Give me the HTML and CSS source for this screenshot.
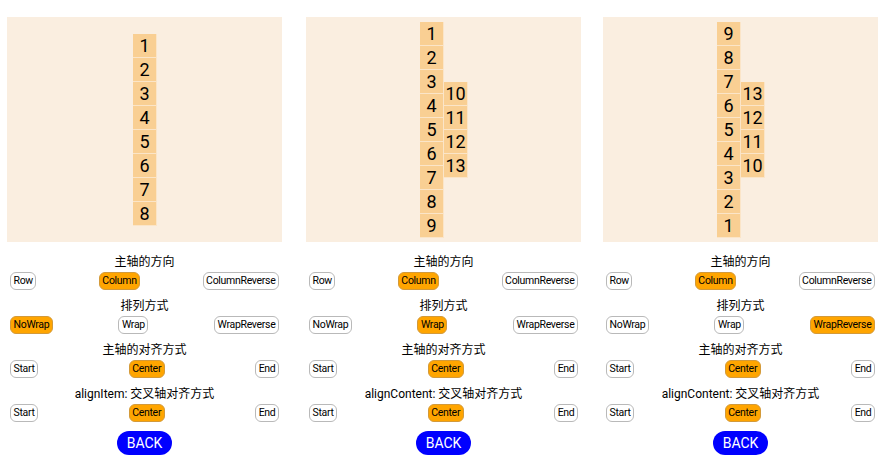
FILE: index.html
```html
<!DOCTYPE html>
<html>
<head>
<meta charset="utf-8">
<link rel="stylesheet" href="styles.css">
</head>
<body>
<div class="page">
  <div class="panel">
    <div class="canvas">
      <div class="item">1</div><div class="item">2</div><div class="item">3</div><div class="item">4</div>
      <div class="item">5</div><div class="item">6</div><div class="item">7</div><div class="item">8</div>
    </div>
    <div class="sec first">
      <div class="title">主轴的方向</div>
      <div class="btns"><span class="btn">Row</span><span class="btn on">Column</span><span class="btn">ColumnReverse</span></div>
    </div>
    <div class="sec">
      <div class="title">排列方式</div>
      <div class="btns"><span class="btn on">NoWrap</span><span class="btn">Wrap</span><span class="btn">WrapReverse</span></div>
    </div>
    <div class="sec">
      <div class="title">主轴的对齐方式</div>
      <div class="btns"><span class="btn">Start</span><span class="btn on">Center</span><span class="btn">End</span></div>
    </div>
    <div class="sec">
      <div class="title">alignItem: 交叉轴对齐方式</div>
      <div class="btns"><span class="btn">Start</span><span class="btn on">Center</span><span class="btn">End</span></div>
    </div>
    <div class="back">BACK</div>
  </div>

  <div class="panel">
    <div class="canvas wrap">
      <div class="item">1</div><div class="item">2</div><div class="item">3</div><div class="item">4</div>
      <div class="item">5</div><div class="item">6</div><div class="item">7</div><div class="item">8</div>
      <div class="item">9</div><div class="item">10</div><div class="item">11</div><div class="item">12</div>
      <div class="item">13</div>
    </div>
    <div class="sec first">
      <div class="title">主轴的方向</div>
      <div class="btns"><span class="btn">Row</span><span class="btn on">Column</span><span class="btn">ColumnReverse</span></div>
    </div>
    <div class="sec">
      <div class="title">排列方式</div>
      <div class="btns"><span class="btn">NoWrap</span><span class="btn on">Wrap</span><span class="btn">WrapReverse</span></div>
    </div>
    <div class="sec">
      <div class="title">主轴的对齐方式</div>
      <div class="btns"><span class="btn">Start</span><span class="btn on">Center</span><span class="btn">End</span></div>
    </div>
    <div class="sec">
      <div class="title">alignContent: 交叉轴对齐方式</div>
      <div class="btns"><span class="btn">Start</span><span class="btn on">Center</span><span class="btn">End</span></div>
    </div>
    <div class="back">BACK</div>
  </div>

  <div class="panel">
    <div class="canvas wrap rev">
      <div class="item">1</div><div class="item">2</div><div class="item">3</div><div class="item">4</div>
      <div class="item">5</div><div class="item">6</div><div class="item">7</div><div class="item">8</div>
      <div class="item">9</div><div class="item">10</div><div class="item">11</div><div class="item">12</div>
      <div class="item">13</div>
    </div>
    <div class="sec first">
      <div class="title">主轴的方向</div>
      <div class="btns"><span class="btn">Row</span><span class="btn on">Column</span><span class="btn">ColumnReverse</span></div>
    </div>
    <div class="sec">
      <div class="title">排列方式</div>
      <div class="btns"><span class="btn">NoWrap</span><span class="btn">Wrap</span><span class="btn on">WrapReverse</span></div>
    </div>
    <div class="sec">
      <div class="title">主轴的对齐方式</div>
      <div class="btns"><span class="btn">Start</span><span class="btn on">Center</span><span class="btn">End</span></div>
    </div>
    <div class="sec">
      <div class="title">alignContent: 交叉轴对齐方式</div>
      <div class="btns"><span class="btn">Start</span><span class="btn on">Center</span><span class="btn">End</span></div>
    </div>
    <div class="back">BACK</div>
  </div>
</div>
</body>
</html>
```

FILE: styles.css
```css
html, body {
  margin: 0;
  padding: 0;
  background: #ffffff;
}
body {
  font-family: Roboto, "Noto Sans CJK SC", sans-serif;
  color: #000;
}
.page {
  display: flex;
  padding: 17px 0 0 7px;
}
.panel {
  width: 275px;
  display: flex;
  flex-direction: column;
}
.panel + .panel {
  margin-left: 24px;
}
.panel + .panel + .panel {
  margin-left: 22px;
}
.canvas {
  height: 225px;
  background: #faeee0;
  display: flex;
  flex-direction: column;
  flex-wrap: nowrap;
  justify-content: center;
  align-items: center;
  align-content: center;
}
.canvas.wrap {
  flex-wrap: wrap;
}
.canvas.rev {
  flex-direction: column-reverse;
}
.item {
  width: 24px;
  height: 24px;
  flex: none;
  background: #f9cf93;
  box-shadow: inset -1px -1px 0 #fbe5c8;
  font-size: 18px;
  line-height: 24px;
  text-align: center;
}
.sec {
  display: flex;
  flex-direction: column;
  margin-top: 6px;
}
.sec.first {
  margin-top: 10px;
}
.title {
  font-size: 12px;
  line-height: 20px;
  height: 20px;
  text-align: center;
}
.btns {
  display: flex;
  justify-content: space-between;
  padding: 0 3px;
}
.btn {
  box-sizing: border-box;
  height: 18px;
  border: 1px solid #b9b9b9;
  border-radius: 6px;
  background: #fff;
  padding: 0 2.5px;
  font-size: 10.5px;
  letter-spacing: -0.3px;
  line-height: 16px;
  white-space: nowrap;
}
.btn.on {
  background: #ffa500;
  border-color: #d39a3a;
}
.back {
  align-self: center;
  margin-top: 9px;
  width: 55px;
  height: 24px;
  border-radius: 12px;
  background: #0000ff;
  color: #fff;
  font-size: 14px;
  line-height: 24px;
  text-align: center;
}
```
